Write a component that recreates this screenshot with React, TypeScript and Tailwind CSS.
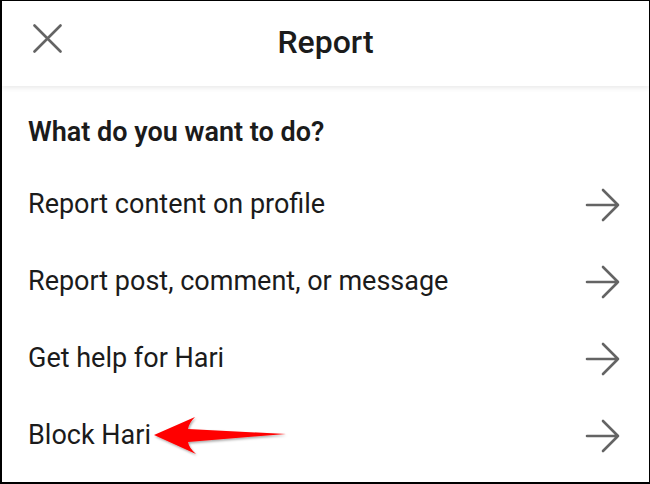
import React from 'react';

const rows = [
  'Report content on profile',
  'Report post, comment, or message',
  'Get help for Hari',
  'Block Hari',
];

function CloseIcon() {
  return (
    <svg width="29" height="29" viewBox="0 0 29 29" className="block">
      <path d="M1.5 1.5 L27.5 27.5 M27.5 1.5 L1.5 27.5" stroke="#646464" strokeWidth="2.6" strokeLinecap="round" fill="none" />
    </svg>
  );
}

function ArrowIcon() {
  return (
    <svg width="36" height="34" viewBox="0 0 36 34" className="block">
      <path d="M2 17 H33 M18 2 L33 17 L18 32" stroke="#646464" strokeWidth="2.6" strokeLinecap="round" strokeLinejoin="round" fill="none" />
    </svg>
  );
}

function RedArrow() {
  return (
    <svg width="140" height="42" viewBox="0 0 140 42" className="block overflow-visible">
      <defs>
        <filter id="sh" x="-10%" y="-30%" width="120%" height="160%">
          <feDropShadow dx="1" dy="1.5" stdDeviation="1.2" floodColor="#000" floodOpacity="0.35" />
        </filter>
      </defs>
      <path
        d="M2 20 L43 2 Q37 8 36 14 L134 19 L36 27 Q37 33 44 39 Z"
        fill="#ff0000"
        filter="url(#sh)"
      />
    </svg>
  );
}

export default function App() {
  return (
    <div
      className="relative w-[650px] h-[484px] overflow-hidden bg-white border-black border-t border-r border-l-2 border-b-2 text-[#1b1b1b]"
      style={{ fontFamily: 'Roboto, "Liberation Sans", sans-serif' }}
    >
      <header className="relative h-[85px] flex items-center justify-center shadow-[0_2px_5px_rgba(0,0,0,0.09)]">
        <div className="absolute left-[31px] top-[23px]">
          <CloseIcon />
        </div>
        <h1 className="text-[32px] leading-none font-medium -mt-[3px]">Report</h1>
      </header>

      <div className="pl-[26px] pr-[28px] pt-[30px]">
        <h2 className="text-[27px] leading-[32px] font-semibold">What do you want to do?</h2>
        <ul className="mt-[18px]">
          {rows.map((r) => (
            <li key={r} className="h-[77px] flex items-center justify-between">
              <span className="text-[27px] leading-none">{r}</span>
              <ArrowIcon />
            </li>
          ))}
        </ul>
      </div>

      <div className="absolute left-[150px] top-[414px]">
        <RedArrow />
      </div>
    </div>
  );
}
